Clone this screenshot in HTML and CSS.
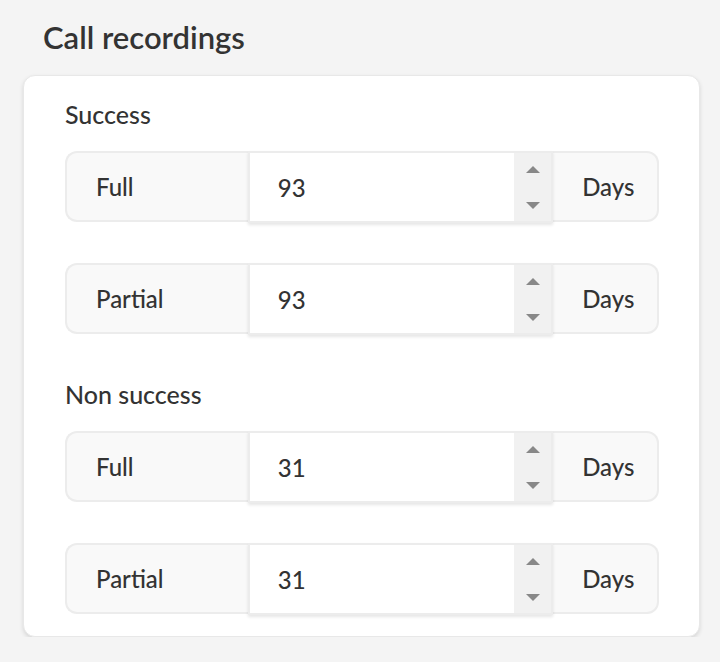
FILE: index.html
```html
<!DOCTYPE html>
<html lang="en">
  <head>
    <meta charset="UTF-8" />
    <meta name="viewport" content="width=device-width, initial-scale=1.0" />
    <title>Call recordings</title>
    <link rel="stylesheet" href="styles.css">
  </head>
  <body>
    <h1 class="page-title">Call recordings</h1>
    <div class="card">
      <h4 class="group-title">Success</h4>
      <div class="field-row">
        <div class="addon addon-left">Full</div>
        <div class="number-box">
          <span class="number-value">93</span>
          <div class="spinner">
            <span class="arrow-up"></span>
            <span class="arrow-down"></span>
          </div>
        </div>
        <div class="addon addon-right">Days</div>
      </div>
      <div class="field-row">
        <div class="addon addon-left">Partial</div>
        <div class="number-box">
          <span class="number-value">93</span>
          <div class="spinner">
            <span class="arrow-up"></span>
            <span class="arrow-down"></span>
          </div>
        </div>
        <div class="addon addon-right">Days</div>
      </div>

      <h4 class="group-title group-second">Non success</h4>
      <div class="field-row">
        <div class="addon addon-left">Full</div>
        <div class="number-box">
          <span class="number-value">31</span>
          <div class="spinner">
            <span class="arrow-up"></span>
            <span class="arrow-down"></span>
          </div>
        </div>
        <div class="addon addon-right">Days</div>
      </div>
      <div class="field-row">
        <div class="addon addon-left">Partial</div>
        <div class="number-box">
          <span class="number-value">31</span>
          <div class="spinner">
            <span class="arrow-up"></span>
            <span class="arrow-down"></span>
          </div>
        </div>
        <div class="addon addon-right">Days</div>
      </div>
    </div>
  </body>
</html>
```

FILE: styles.css
```css
body {
  margin: 0;
  background-color: #f4f4f4;
  font-family: Lato, "Open Sans", sans-serif;
  color: #333;
}
.page-title {
  margin: 0;
  padding: 18px 0 0 43px;
  font-size: 31px;
  line-height: 38px;
  font-weight: 600;
  color: #333;
}
.card {
  width: 677px;
  box-sizing: border-box;
  margin: 19px 0 0 23px;
  padding: 23px 40px 22px 41px;
  background-color: #fff;
  border: 1px solid #e8e8e8;
  border-radius: 12px;
  box-shadow: 0 2px 4px rgba(0, 0, 0, 0.12);
}
.group-title {
  margin: 0;
  font-size: 25px;
  line-height: 30px;
  font-weight: 500;
}
.group-second {
  margin-top: 45px;
}
.field-row {
  display: flex;
  height: 71px;
  margin-top: 22px;
}
.field-row + .field-row {
  margin-top: 41px;
}
.addon {
  display: flex;
  align-items: center;
  box-sizing: border-box;
  height: 71px;
  font-size: 24px;
  font-weight: 500;
  background-color: #f9f9f9;
  border: 2px solid #ececec;
}
.addon-left {
  width: 183px;
  padding-left: 29px;
  border-right: none;
  border-radius: 12px 0 0 12px;
}
.addon-right {
  width: 106px;
  padding-left: 29px;
  border-left: none;
  border-radius: 0 12px 12px 0;
}
.number-box {
  display: flex;
  box-sizing: border-box;
  width: 306px;
  height: 72px;
  background-color: #fff;
  border: 2px solid #ececec;
  box-shadow: 0 2px 3px rgba(0, 0, 0, 0.1);
  position: relative;
  z-index: 1;
}
.number-value {
  flex: 1;
  display: flex;
  align-items: center;
  padding-left: 28px;
  font-size: 24px;
  font-weight: 500;
}
.spinner {
  width: 37px;
  background-color: #f1f1f1;
  display: flex;
  flex-direction: column;
  align-items: center;
  justify-content: space-between;
  padding: 13px 0 12px;
}
.arrow-up {
  width: 0;
  height: 0;
  border-left: 7px solid transparent;
  border-right: 7px solid transparent;
  border-bottom: 7px solid #888;
}
.arrow-down {
  width: 0;
  height: 0;
  border-left: 7px solid transparent;
  border-right: 7px solid transparent;
  border-top: 7px solid #888;
}
```
